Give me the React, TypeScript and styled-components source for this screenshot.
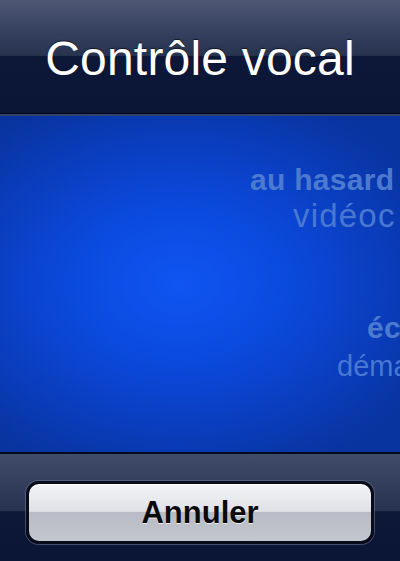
import React from "react";
import styled, { createGlobalStyle } from "styled-components";

const GlobalStyle = createGlobalStyle`
  html, body {
    margin: 0;
    padding: 0;
    background: #0b1535;
  }
  body {
    font-family: "Liberation Sans", Arial, Helvetica, sans-serif;
    -webkit-font-smoothing: antialiased;
  }
`;

const Screen = styled.div`
  width: 400px;
  height: 561px;
  display: flex;
  flex-direction: column;
  overflow: hidden;
`;

const Header = styled.header`
  height: 113px;
  flex: none;
  display: flex;
  align-items: center;
  justify-content: center;
  background: linear-gradient(
    to bottom,
    #4e5875 0%,
    #343f5e 30%,
    #28334f 49%,
    #0d1839 50%,
    #0b1636 100%
  );
  border-bottom: 1px solid #050b1e;
  box-shadow: inset 0 -1px 0 #0a1431;
`;

const Title = styled.h1`
  margin: 0;
  padding-top: 4px;
  color: #ffffff;
  font-weight: normal;
  font-size: 48px;
  letter-spacing: 0.2px;
  text-shadow: 0 -1px 1px rgba(0, 0, 0, 0.6);
`;

const Divider = styled.div<{ $tone: string }>`
  height: 2px;
  flex: none;
  background: ${(p) => p.$tone};
`;

const Stage = styled.main`
  flex: 1;
  display: flex;
  flex-direction: column;
  padding-top: 46px;
  overflow: hidden;
  background: radial-gradient(
    ellipse 70% 60% at 45% 50%,
    #0f55f2 0%,
    #0b49dc 40%,
    #0a3cba 75%,
    #08349f 100%
  );
`;

const Phrase = styled.div<{
  $bold?: boolean;
  $indent: number;
  $gap: number;
  $size: number;
  $spacing: number;
}>`
  margin-top: ${(p) => p.$gap}px;
  padding-left: ${(p) => p.$indent}px;
  white-space: nowrap;
  font-size: ${(p) => p.$size}px;
  letter-spacing: ${(p) => p.$spacing}px;
  font-weight: ${(p) => (p.$bold ? "bold" : "normal")};
  line-height: 36px;
  color: ${(p) => (p.$bold ? "#4c7ad0" : "#4878d2")};
`;

const Footer = styled.footer`
  height: 107px;
  flex: none;
  display: flex;
  align-items: center;
  justify-content: center;
  background: linear-gradient(
    to bottom,
    #414c69 0%,
    #323d5c 30%,
    #28334f 53%,
    #0d1839 54%,
    #0b1535 100%
  );
`;

const CancelButton = styled.button`
  width: 348px;
  height: 63px;
  margin-top: 10px;
  padding: 0;
  border: 3px solid #080c18;
  border-radius: 13px;
  box-shadow: 0 0 0 1px rgba(110, 120, 150, 0.55), inset 0 1px 0 #ffffff;
  background: linear-gradient(
    to bottom,
    #f3f4f7 0%,
    #dfe1e6 48%,
    #b9bcc6 50%,
    #c3c6ce 100%
  );
  font-family: "Liberation Sans", Arial, Helvetica, sans-serif;
  font-size: 31px;
  font-weight: bold;
  color: #0a0a0a;
  text-shadow: 0 1px 0 rgba(255, 255, 255, 0.7);
  cursor: pointer;
`;

const phrases = [
  { text: "au hasard", bold: true, indent: 250, gap: 0, size: 30, spacing: 0.3 },
  { text: "vidéoc", bold: false, indent: 293, gap: 0, size: 33, spacing: 1.2 },
  { text: "éc", bold: true, indent: 367, gap: 76, size: 30, spacing: 0.3 },
  { text: "déma", bold: false, indent: 337, gap: 2, size: 29, spacing: 0 },
];

export default function App() {
  return (
    <>
      <GlobalStyle />
      <Screen>
        <Header>
          <Title>Contrôle vocal</Title>
        </Header>
        <Divider $tone="#33406a" />
        <Stage>
          {phrases.map((p) => (
            <Phrase
              key={p.text}
              $bold={p.bold}
              $indent={p.indent}
              $gap={p.gap}
              $size={p.size}
              $spacing={p.spacing}
            >
              {p.text}
            </Phrase>
          ))}
        </Stage>
        <Divider $tone="#050b1e" />
        <Footer>
          <CancelButton>Annuler</CancelButton>
        </Footer>
      </Screen>
    </>
  );
}
